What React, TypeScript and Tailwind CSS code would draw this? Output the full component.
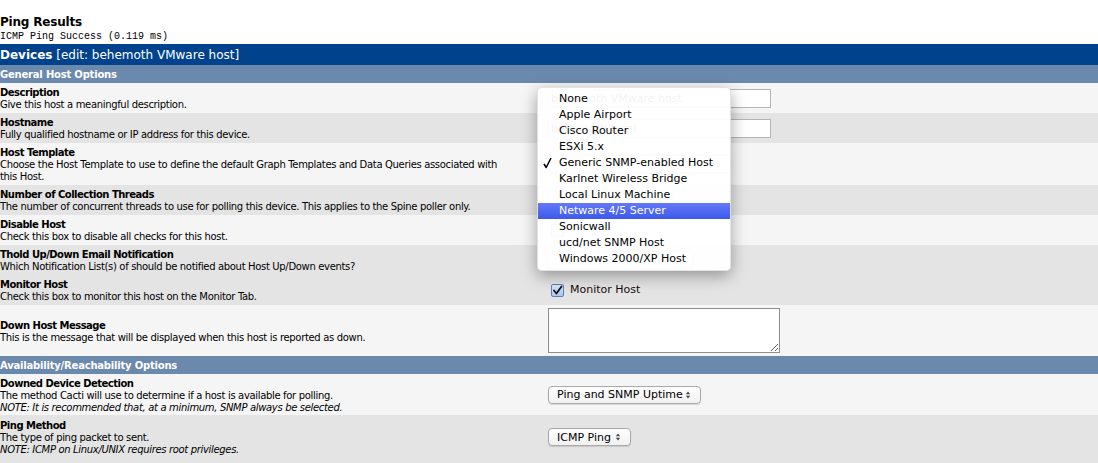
import React from "react";

const V = { fontFamily: '"DejaVu Sans", Verdana, sans-serif' };
const L = { fontFamily: '"DejaVu Sans", "Lucida Grande", sans-serif' };

function Arrows() {
  return (
    <svg width="6" height="10" viewBox="0 0 6 10" className="shrink-0">
      <path d="M3 1.5 L5.2 4.2 L0.8 4.2 Z" fill="#444" />
      <path d="M3 8.5 L5.2 5.8 L0.8 5.8 Z" fill="#444" />
    </svg>
  );
}

function MacSelect({ label, width }: { label?: string; width: string }) {
  return (
    <div
      className={`flex items-center justify-between h-[18px] ${width} rounded-[4px] border border-[#a9a9a9] bg-gradient-to-b from-white to-[#f1f1f1] pl-[8px] pr-[9px] text-[11px] text-black whitespace-nowrap shadow-[0_1px_1px_rgba(0,0,0,0.12)]`}
      style={L}
    >
      <span className="leading-none">{label ?? ""}</span>
      <Arrows />
    </div>
  );
}

function Row({
  title,
  lines,
  light,
  h,
  children,
}: {
  title: string;
  lines: React.ReactNode[];
  light: boolean;
  h: string;
  children?: React.ReactNode;
}) {
  return (
    <div className={`grid grid-cols-[548px_1fr] ${h} ${light ? "bg-[#f5f5f5]" : "bg-[#e4e4e4]"}`}>
      <div className="flex flex-col justify-center pt-[2px] text-[10px] leading-[12px] text-black" style={V}>
        <div className="font-bold tracking-[-0.5px]">{title}</div>
        {lines.map((l, i) => (
          <div key={i} className="tracking-[-0.33px] whitespace-nowrap">
            {l}
          </div>
        ))}
      </div>
      <div className="flex items-center">{children}</div>
    </div>
  );
}

function Section({ title }: { title: string }) {
  return (
    <div className="h-[18px] bg-[#6b88ad] flex items-center text-white font-bold text-[10px] tracking-[-0.2px]" style={V}>
      {title}
    </div>
  );
}

const items = [
  "None",
  "Apple Airport",
  "Cisco Router",
  "ESXi 5.x",
  "Generic SNMP-enabled Host",
  "Karlnet Wireless Bridge",
  "Local Linux Machine",
  "Netware 4/5 Server",
  "Sonicwall",
  "ucd/net SNMP Host",
  "Windows 2000/XP Host",
];

function Checkbox({ checked }: { checked: boolean }) {
  return (
    <div className="w-[13px] h-[13px] rounded-[2px] border border-[#5d7fb3] bg-gradient-to-b from-[#dbe8fb] to-[#a9c6ee] flex items-center justify-center">
      {checked && (
        <svg width="11" height="11" viewBox="0 0 11 11">
          <path d="M2 5.5 L4.5 8.5 L9.5 1.5" stroke="#111" strokeWidth="1.8" fill="none" strokeLinecap="round" strokeLinejoin="round" />
        </svg>
      )}
    </div>
  );
}

export default function App() {
  return (
    <div className="relative w-[1098px] h-[463px] overflow-hidden bg-white">
      <div className="h-[14px]" />
      <div className="text-[12px] leading-[16px] font-bold text-black tracking-[-0.2px]" style={V}>
        Ping Results
      </div>
      <div
        className="text-[10px] leading-[12px] text-black mt-[1px]"
        style={{ fontFamily: '"Liberation Mono", "Courier New", monospace' }}
      >
        ICMP Ping Success (0.119 ms)
      </div>
      <div className="h-[1px]" />
      <div className="h-[21px] bg-[#00438c] flex items-center text-white text-[12px]" style={V}>
        <span className="font-bold">Devices</span>
        <span>&nbsp;[edit: behemoth VMware host]</span>
      </div>
      <Section title="General Host Options" />
      <Row title="Description" lines={["Give this host a meaningful description."]} light h="h-[30px]">
        <input
          readOnly
          value="behemoth VMware host"
          className="w-[223px] h-[19px] border border-[#b5b5b5] bg-white px-[2px] text-[11px] text-black outline-none"
          style={L}
        />
      </Row>
      <Row title="Hostname" lines={["Fully qualified hostname or IP address for this device."]} light={false} h="h-[30px]">
        <input
          readOnly
          value="behemoth.local"
          className="w-[223px] h-[19px] border border-[#b5b5b5] bg-white px-[2px] text-[11px] text-black outline-none"
          style={L}
        />
      </Row>
      <Row
        title="Host Template"
        lines={[
          "Choose the Host Template to use to define the default Graph Templates and Data Queries associated with",
          "this Host.",
        ]}
        light
        h="h-[42px]"
      >
        <MacSelect width="w-[183px]" />
      </Row>
      <Row
        title="Number of Collection Threads"
        lines={["The number of concurrent threads to use for polling this device. This applies to the Spine poller only."]}
        light={false}
        h="h-[30px]"
      >
        <MacSelect width="w-[125px]" />
      </Row>
      <Row title="Disable Host" lines={["Check this box to disable all checks for this host."]} light h="h-[30px]">
        <div className="ml-[3px] flex items-center">
          <Checkbox checked={false} />
        </div>
      </Row>
      <Row
        title="Thold Up/Down Email Notification"
        lines={["Which Notification List(s) of should be notified about Host Up/Down events?"]}
        light={false}
        h="h-[30px]"
      >
        <MacSelect width="w-[145px]" />
      </Row>
      <Row title="Monitor Host" lines={["Check this box to monitor this host on the Monitor Tab."]} light={false} h="h-[30px]">
        <div className="ml-[3px] flex items-center gap-[6px] text-[11px] text-[#1a0a0a]" style={L}>
          <Checkbox checked />
          <span>Monitor Host</span>
        </div>
      </Row>
      <Row
        title="Down Host Message"
        lines={["This is the message that will be displayed when this host is reported as down."]}
        light
        h="h-[51px]"
      >
        <textarea readOnly className="w-[232px] h-[45px] border border-[#8f8f8f] bg-white outline-none" />
      </Row>
      <Section title="Availability/Reachability Options" />
      <Row
        title="Downed Device Detection"
        lines={[
          "The method Cacti will use to determine if a host is available for polling.",
          <i key="n">NOTE: It is recommended that, at a minimum, SNMP always be selected.</i>,
        ]}
        light
        h="h-[41px]"
      >
        <MacSelect label="Ping and SNMP Uptime" width="w-[153px]" />
      </Row>
      <Row
        title="Ping Method"
        lines={["The type of ping packet to sent.", <i key="n">NOTE: ICMP on Linux/UNIX requires root privileges.</i>]}
        light={false}
        h="h-[44px]"
      >
        <MacSelect label="ICMP Ping" width="w-[83px]" />
      </Row>
      <div className="h-[20px] bg-[#e4e4e4]" />

      {/* dropdown popup overlay */}
      <div
        className="absolute left-[537px] top-[87px] w-[194px] h-[184px] rounded-[5px] bg-white/[0.95] shadow-[0_5px_16px_rgba(0,0,0,0.35)] border border-[#d0d0d0]/60 pt-[3px]"
        style={L}
      >
        {items.map((it) => {
          const hl = it === "Netware 4/5 Server";
          const ck = it === "Generic SNMP-enabled Host";
          return (
            <div
              key={it}
              className={`relative h-[16px] flex items-center pl-[21px] text-[11px] ${
                hl ? "bg-gradient-to-b from-[#6479f7] to-[#3e58ec] text-white" : "text-black"
              }`}
            >
              {ck && (
                <svg width="9" height="12" viewBox="0 0 9 12" className="absolute left-[5px] top-[2px]">
                  <path d="M1 7 L3.2 10.5 L8 1" stroke="#000" strokeWidth="1.5" fill="none" strokeLinejoin="round" />
                </svg>
              )}
              {it}
            </div>
          );
        })}
      </div>
    </div>
  );
}
